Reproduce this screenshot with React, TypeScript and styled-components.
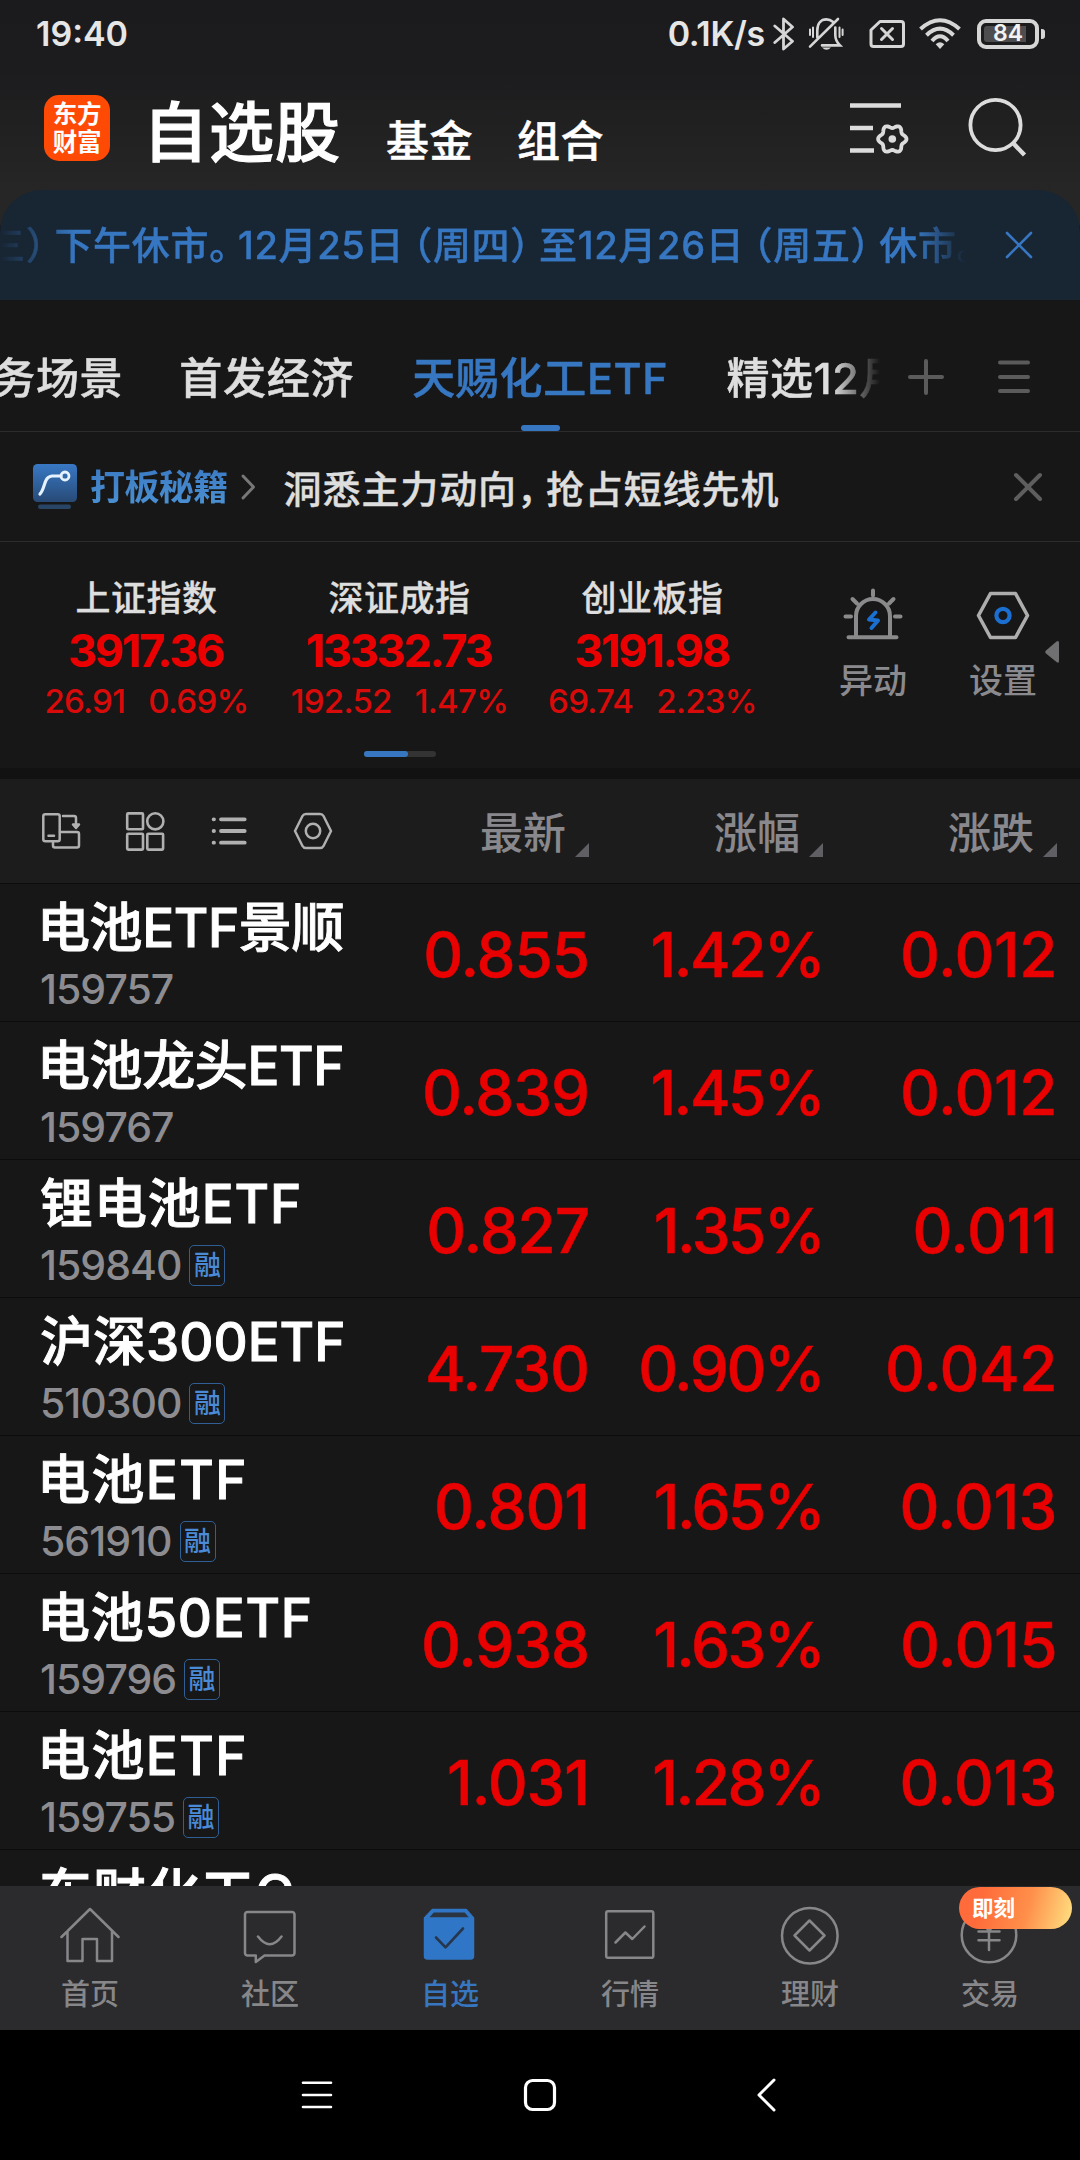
import React from 'react';
import styled, { createGlobalStyle } from 'styled-components';

const GlobalStyle = createGlobalStyle`
  * { box-sizing: border-box; }
  body {
    margin: 0;
    background: #000;
    font-family: Inter, "Noto Sans CJK SC", sans-serif;
    font-weight: 500;
    line-height: 1;
    text-spacing-trim: space-all;
  }
  svg { display: block; flex: none; }
`;

const Screen = styled.div`
  width: 1080px;
  height: 2160px;
  display: flex;
  flex-direction: column;
  overflow: hidden;
  background: #171717;
  color: #e0e0e0;
  white-space: nowrap;
`;

/* ---------- status bar + title ---------- */

const Top = styled.header`
  height: 225px;
  flex: none;
  background: linear-gradient(#1b1b1d 0, #1c1c1e 70px, #262626 190px);
`;

const StatusBar = styled.div`
  height: 67px;
  padding: 0 35px 0 36px;
  display: flex;
  align-items: center;
  color: #e6e6e6;
  font-size: 34px;
  font-weight: 600;
`;

const NetSpeed = styled.span`
  margin-left: auto;
  margin-right: 8px;
  letter-spacing: -0.3px;
`;

const StatusIcons = styled.div`
  display: flex;
  align-items: center;
`;

const Battery = styled.div`
  width: 62px;
  height: 30px;
  margin-left: 16px;
  padding: 3px;
  border: 4px solid #d6d6d6;
  border-radius: 9px;
  display: flex;
`;

const BatteryLevel = styled.div`
  width: 42px;
  height: 16px;
  border-radius: 3px 0 0 3px;
  background: #4d4d4f;
  display: flex;
  align-items: center;
  justify-content: flex-end;
  padding-right: 3px;
  font-size: 23px;
  color: #f2f2f2;
`;

const BatteryTip = styled.div`
  width: 4px;
  height: 10px;
  margin-left: 2px;
  border-radius: 0 3px 3px 0;
  background: #d6d6d6;
`;

const TitleBar = styled.div`
  height: 123px;
  padding: 0 50px 0 44px;
  display: flex;
  align-items: center;
`;

const Logo = styled.div`
  width: 66px;
  height: 66px;
  margin-top: -1px;
  border-radius: 15px;
  background: #ff4a06;
  color: #fff;
  display: flex;
  flex-direction: column;
  align-items: center;
  justify-content: center;
  gap: 2px;
  font-size: 24.5px;
  font-weight: 700;
  line-height: 26px;
  letter-spacing: -0.3px;
`;

const Title = styled.h1`
  margin: 8px 0 0 33px;
  font-size: 65px;
  font-weight: 500;
  letter-spacing: 1px;
  color: #fff;
  -webkit-text-stroke: 1.2px #fff;
`;

const TitleLink = styled.span<{ $gap: number }>`
  margin: 26px 0 0 ${(p) => p.$gap}px;
  font-size: 43px;
  letter-spacing: 0.5px;
  color: #fff;
  -webkit-text-stroke: 0.5px #fff;
`;

const TitleActions = styled.div`
  margin-left: auto;
  display: flex;
  align-items: center;
  gap: 58px;
`;

/* ---------- notice ---------- */

const Notice = styled.div`
  height: 110px;
  margin-top: -35px;
  flex: none;
  display: flex;
  align-items: center;
  border-radius: 42px 42px 0 0;
  background: #182533;
  color: #3777c2;
`;

const NoticeText = styled.div`
  width: 974px;
  height: 60px;
  display: flex;
  align-items: center;
  overflow: hidden;
  font-size: 38px;
  letter-spacing: 0.7px;
  text-indent: -13px;
  -webkit-text-stroke: 0.4px #3777c2;
  mask-image: linear-gradient(90deg, transparent 0, #000 75px, #000 915px, transparent 966px);
`;

const Punct = styled.span<{ $open?: boolean }>`
  font-feature-settings: "halt";
  margin: ${(p) => (p.$open ? '0 0 0 9px' : '0 9px 0 0')};
`;

const NoticeClose = styled.div`
  margin-left: 29.5px;
`;

/* ---------- group tabs ---------- */

const Tabs = styled.nav`
  height: 132px;
  flex: none;
  display: flex;
  border-bottom: 1px solid #2d2d2e;
`;

const TabStrip = styled.div`
  width: 882px;
  display: flex;
  gap: 58px;
  overflow: hidden;
  mask-image: linear-gradient(90deg, #000 832px, transparent 880px);
`;

const Tab = styled.div<{ $active?: boolean }>`
  flex: none;
  display: flex;
  flex-direction: column;
  align-items: center;
  padding-top: 57px;
  font-size: 43px;
  letter-spacing: 0.7px;
  color: ${(p) => (p.$active ? '#3777c2' : '#dedede')};
  -webkit-text-stroke: 0.5px ${(p) => (p.$active ? '#3777c2' : '#dedede')};
  &:first-child { margin: 0 -2px 0 -51.5px; }
`;

const TabMark = styled.i`
  width: 39px;
  height: 6px;
  margin-top: 25px;
  border-radius: 3px;
  background: #3777c2;
`;

const TabTools = styled.div`
  display: flex;
  gap: 53px;
  padding: 58px 0 0 25px;
`;

/* ---------- promo ---------- */

const Promo = styled.div`
  height: 110px;
  flex: none;
  display: flex;
  align-items: center;
  padding: 0 37px 0 32px;
  border-bottom: 1px solid #2d2d2e;
`;

const PromoBrand = styled.span`
  margin: 0 12px 0 12px;
  font-size: 35px;
  font-weight: 700;
  letter-spacing: -0.6px;
  background: linear-gradient(#3c7ac4, #4b92d2);
  background-clip: text;
  color: transparent;
  line-height: 40px;
`;

const PromoText = styled.span`
  margin: 4px auto 0 27px;
  font-size: 38px;
  letter-spacing: 0.9px;
  color: #dedede;
  -webkit-text-stroke: 0.4px #dedede;
`;

/* ---------- indices ---------- */

const Indices = styled.section`
  height: 237px;
  flex: none;
  display: grid;
  grid-template-columns: 759px 130px 130px 24px;
  padding-left: 20px;
  border-bottom: 11px solid #121212;
`;

const IndexPager = styled.div`
  display: flex;
  flex-direction: column;
  align-items: center;
`;

const IndexList = styled.div`
  display: flex;
  height: 209px;
`;

const IndexCell = styled.div`
  width: 253px;
  padding-top: 39px;
  display: flex;
  flex-direction: column;
  align-items: center;
`;

const IndexName = styled.div`
  font-size: 35px;
  letter-spacing: 0.5px;
  color: #dedede;
  -webkit-text-stroke: 0.3px #dedede;
`;

const IndexValue = styled.div`
  margin: 12px 2px 0 0;
  font-size: 45px;
  font-weight: 700;
  line-height: 46px;
  letter-spacing: -2.2px;
  color: #ea0000;
`;

const IndexChange = styled.div`
  margin-top: 11px;
  display: flex;
  gap: 23px;
  font-size: 33px;
  letter-spacing: -0.7px;
  color: #d90a0a;
`;

const PagerTrack = styled.div`
  width: 72px;
  height: 6px;
  border-radius: 3px;
  background: #333334;
`;

const PagerThumb = styled.div`
  width: 44px;
  height: 6px;
  border-radius: 3px;
  background: #3777c2;
`;

const IndexAction = styled.div`
  display: flex;
  flex-direction: column;
  align-items: center;
  padding: 46px 0 0 60px;
  width: 130px;
  margin-left: -1px;
  gap: 22px;
  font-size: 34px;
  color: #8a8a8e;
`;

const DrawerHandle = styled.div`
  padding: 98px 0 0 6px;
`;

/* ---------- table ---------- */

const columns = '355px 234px 234px 234px';

const TableHead = styled.div`
  height: 105px;
  flex: none;
  display: grid;
  grid-template-columns: ${columns};
  background: #1c1c1c;
  border-bottom: 1px solid #0c0c0c;
`;

const ViewTools = styled.div`
  display: flex;
  align-items: center;
  gap: 44px;
  padding-left: 41px;
`;

const HeadCell = styled.div`
  display: flex;
  justify-content: flex-end;
  padding-top: 33px;
  gap: 9px;
  font-size: 43px;
  color: #88888d;
`;

const SortMark = styled.i`
  width: 14px;
  height: 14px;
  margin-top: 31px;
  background: #606064;
  clip-path: polygon(100% 0, 100% 100%, 0 100%);
`;

const Rows = styled.div`
  height: 1002px;
  flex: none;
  overflow: hidden;
`;

const Row = styled.div`
  height: 138px;
  display: grid;
  grid-template-columns: ${columns};
  border-bottom: 1px solid #0c0c0c;
`;

const Security = styled.div`
  padding: 18px 0 0 40px;
`;

const SecurityName = styled.div<{ $track: number; $hang: number }>`
  margin-left: ${(p) => -p.$hang}px;
  font-size: 53px;
  letter-spacing: ${(p) => p.$track}px;
  color: #fff;
  -webkit-text-stroke: 0.9px #fff;
`;

const SecurityMeta = styled.div`
  display: flex;
  align-items: center;
  gap: 8px;
  height: 42px;
  margin-top: 13px;
  font-size: 41px;
  letter-spacing: -1px;
  color: #8c8c91;
`;

const MarginTag = styled.span`
  width: 36px;
  height: 41px;
  border: 1.5px solid #2f5f94;
  border-radius: 5px;
  display: flex;
  align-items: center;
  justify-content: center;
  font-size: 27px;
  letter-spacing: 0;
  color: #4a8ad6;
`;

const Figure = styled.div<{ $track: number }>`
  display: flex;
  align-items: center;
  justify-content: flex-end;
  padding-top: 4px;
  font-size: 62px;
  letter-spacing: ${(p) => p.$track}px;
  color: #e90000;
  -webkit-text-stroke: 0.5px #e90000;
`;

/* ---------- bottom bars ---------- */

const BottomNav = styled.nav`
  height: 144px;
  flex: none;
  display: grid;
  grid-template-columns: repeat(6, 180px);
  background: #2b2b2d;
`;

const NavItem = styled.div<{ $active?: boolean }>`
  position: relative;
  display: flex;
  flex-direction: column;
  align-items: center;
  padding-top: 20px;
  gap: 14px;
  font-size: 29px;
  color: ${(p) => (p.$active ? '#3777c2' : '#87878a')};
`;

const Ribbon = styled.span`
  position: absolute;
  left: 59px;
  top: 1px;
  width: 113px;
  height: 42px;
  padding-left: 13px;
  border-radius: 21px;
  background: linear-gradient(105deg, #ff6b3a 20%, #ff8f4a 60%, #ffe283 100%);
  color: #fff;
  font-size: 21.5px;
  font-weight: 700;
  line-height: 42px;
`;

const SystemBar = styled.div`
  height: 130px;
  flex: none;
  display: flex;
  align-items: center;
  padding: 0 0 0 301px;
  background: #000;
`;

const SystemKey = styled.div<{ $gap?: number }>`
  margin-left: ${(p) => p.$gap ?? 0}px;
`;

/* ---------- icons ---------- */

type IconProps = { w: number; h: number; color?: string; stroke?: number; children: React.ReactNode };

const Icon = ({ w, h, color = 'currentColor', stroke = 3, children }: IconProps) => (
  <svg
    width={w}
    height={h}
    viewBox={`0 0 ${w} ${h}`}
    fill="none"
    stroke={color}
    strokeWidth={stroke}
    strokeLinecap="round"
    strokeLinejoin="round"
  >
    {children}
  </svg>
);

const gearPath = (cx: number, cy: number) => {
  const points = Array.from({ length: 72 }, (_, i) => {
    const a = (i / 72) * Math.PI * 2;
    const r = 12.6 + 1.6 * Math.cos(6 * a);
    return `${(cx + r * Math.cos(a)).toFixed(2)} ${(cy + r * Math.sin(a)).toFixed(2)}`;
  });
  return `M${points.join('L')}Z`;
};

const StatusGlyphs = () => (
  <StatusIcons>
    <Icon w={22} h={34} color="#d6d6d6" stroke={2.8}>
      <path d="M1.8 9L19.5 24.3L10.5 32V2L19.5 10L1.8 25.5" />
    </Icon>
    <svg width="49" height="34" viewBox="-14 0 49 34" fill="none" stroke="#d6d6d6" strokeWidth="2.6" strokeLinecap="round">
      <path d="M8.3 20.5V13.5C8.3 6.5 12 2.4 17.3 2.4C20 2.4 22 3.2 23.8 4.8M26.3 10.5V18C26.3 22.5 28 25.5 31 28.4H13M1 29.6L29 2" />
      <path d="M13 30.6Q17.5 35 22 30.6Z" fill="#d6d6d6" stroke="none" />
      <path d="M1 12.5v5.5M4 10.5v9.5M30.5 10.5v9.5M33.6 12.5v5.5" strokeWidth="2" />
    </svg>
    <svg width="61" height="30" viewBox="-25 0 61 30" fill="none" stroke="#d6d6d6" strokeWidth="3" strokeLinejoin="round">
      <path d="M11 2.5H32Q34.5 2.5 34.5 5V25Q34.5 27.5 32 27.5H4.5Q2 27.5 2 25V11Z" />
      <path d="M12.5 9.5L23.5 20.5M23.5 9.5L12.5 20.5" strokeLinecap="round" />
    </svg>
    <svg width="56" height="31" viewBox="-14 0 56 31" fill="none" stroke="#d6d6d6" strokeWidth="4">
      <path d="M1.5 11Q21 -6.5 40.5 11M7.5 17.2Q21 4.2 34.5 17.2M13 23Q21 13.5 29 23" />
      <path d="M16.7 26.3Q21 22.3 25.3 26.3L21 31Z" fill="#d6d6d6" stroke="none" />
    </svg>
  </StatusIcons>
);

const FilterIcon = () => (
  <svg width="60" height="54" viewBox="0 0 60 54" fill="none" stroke="#dcdcdc" strokeWidth="4.4">
    <path d="M0 3.5H51M0 26H23M0 48.5H24" />
    <path d={gearPath(42.3, 37)} strokeWidth="3.8" />
    <circle cx="42.3" cy="37" r="3.8" fill="#dcdcdc" stroke="none" />
  </svg>
);

const SearchIcon = () => (
  <Icon w={62} h={62} color="#dcdcdc" stroke={3.8}>
    <circle cx="27.5" cy="27" r="25.1" />
    <path d="M45.5 45.5L56.5 57" strokeWidth="4.4" strokeLinecap="butt" />
  </Icon>
);

const CloseIcon = ({ color, stroke }: { color: string; stroke: number }) => (
  <Icon w={30} h={30} color={color} stroke={stroke}>
    <path d="M3 3L27 27M27 3L3 27" />
  </Icon>
);

const PromoIcon = () => (
  <svg width="46" height="48" viewBox="0 0 46 48">
    <defs>
      <linearGradient id="promoFill" x1="0" y1="0" x2="0" y2="1">
        <stop offset="0" stopColor="#3878c4" />
        <stop offset="1" stopColor="#284a76" />
      </linearGradient>
    </defs>
    <rect x="1" y="1" width="44" height="38" rx="4.5" fill="url(#promoFill)" />
    <rect x="6" y="41.5" width="33" height="4.5" rx="2.2" fill="#294566" />
    <path d="M8 31C13.5 25 11.5 14 20 13H29" fill="none" stroke="#e6f2ff" strokeWidth="3.2" strokeLinecap="round" />
    <circle cx="33" cy="13" r="4" fill="none" stroke="#e6f2ff" strokeWidth="2.8" />
  </svg>
);

const AlarmIcon = () => (
  <Icon w={60} h={54} color="#8a8a8c" stroke={4}>
    <path d="M5.5 49.3H53.5M13 49V28a17 17 0 0 1 34 0V49" />
    <path d="M30 2.5V7.5M9.5 11l4.5 4.5M50.5 11L46 15.5M2.5 28.5H8M52 28.5H57.5" />
    <path d="M32.5 24.5L26 31.5L35 32.5L28.5 40" stroke="#1a6fd0" />
  </Icon>
);

const SettingIcon = () => (
  <Icon w={60} h={54} color="#adadae" stroke={3.6}>
    <path d="M5.5 27.5L17.5 5.5H42.5L54.5 27.5L42.5 49.5H17.5Z" />
    <circle cx="30" cy="27.5" r="6.6" stroke="#1a6fd0" strokeWidth="4.2" />
  </Icon>
);

const ViewIcons = () => (
  <>
    <Icon w={40} h={40} color="#b0b0b0" stroke={2.5}>
      <rect x="2.3" y="3.2" width="16.4" height="27" rx="2" />
      <path d="M7.5 24.7H13M22 5H33a2 2 0 0 1 2 2V14M19 21H36a2 2 0 0 1 2 2V34.5a2 2 0 0 1 -2 2H14a2 2 0 0 1 -2 -2V30.5" />
      <path d="M32 13.5h6l-3 3.5z" fill="#b0b0b0" />
    </Icon>
    <Icon w={40} h={40} color="#b0b0b0" stroke={2.6}>
      <rect x="2.2" y="2.4" width="15.8" height="15.8" rx="1" />
      <circle cx="30.3" cy="10.3" r="8.1" />
      <rect x="2.2" y="22.8" width="15.8" height="15.8" rx="1" />
      <rect x="22.3" y="22.8" width="15.8" height="15.8" rx="1" />
    </Icon>
    <Icon w={40} h={40} color="#b0b0b0" stroke={3.8}>
      <path d="M12 8.3H35.7M12 20H35.7M12 31.7H35.7M4.6 8.3h.4M4.6 20h.4M4.6 31.7h.4" />
    </Icon>
    <Icon w={40} h={40} color="#b0b0b0" stroke={2.5}>
      <path d="M2 20L9.5 5Q10.6 2.9 13 2.9H27Q29.4 2.9 30.5 5L38 20L30.5 35Q29.4 37.1 27 37.1H13Q10.6 37.1 9.5 35Z" />
      <circle cx="20" cy="20" r="7.2" />
    </Icon>
  </>
);

const navIcons: Record<string, React.ReactNode> = {
  home: <path d="M1.5 31L30 3L58.500 31M7.500 25V55H22.500V33H37V55H52V25" />,
  community: (
    <path d="M7.500 6H52a2.500 2.500 0 0 1 2.500 2.500V47a2.500 2.500 0 0 1 -2.500 2.500H24.500L15.800 56V49.500H7.500a2.500 2.500 0 0 1 -2.500 -2.500V8.500a2.500 2.500 0 0 1 2.500 -2.500ZM18 30.500Q29.800 46 41.500 30.500" />
  ),
  watch: (
    <>
      <path d="M5 12L12.500 4H46L53 12V50a2.500 2.500 0 0 1 -2.500 2.500H7.500a2.500 2.500 0 0 1 -2.500 -2.500Z" fill="#3076c6" stroke="#3076c6" />
      <path d="M9.500 11.300L13.800 6.500H44.700L48.800 11.300Z" fill="#2b3441" stroke="none" />
      <path d="M16 31.500L25.500 41.300L43 22.500" stroke="#26374d" strokeWidth={2.6} />
    </>
  ),
  quote: (
    <path d="M8 5.200H51.500a1.800 1.800 0 0 1 1.800 1.800V50a1.800 1.800 0 0 1 -1.800 1.800H8a1.800 1.800 0 0 1 -1.800 -1.800V7a1.800 1.800 0 0 1 1.800 -1.800ZM15.500 36.500L25.400 26.500L32.300 33L44.500 20.500" />
  ),
  wealth: (
    <>
      <circle cx="29.8" cy="29.8" r="27.8" />
      <path d="M29.500 14.500L44.500 29.500L29.500 44.500L14.500 29.500Z" />
    </>
  ),
  trade: (
    <>
      <circle cx="29" cy="29" r="27.3" />
      <path d="M20 13L29 25L38 13M18.500 25.500H39.500M18.500 34.200H39.500M29 25V44" />
    </>
  ),
};

/* ---------- data ---------- */

const indices = [
  { name: '上证指数', value: '3917.36', change: '26.91', percent: '0.69%' },
  { name: '深证成指', value: '13332.73', change: '192.52', percent: '1.47%' },
  { name: '创业板指', value: '3191.98', change: '69.74', percent: '2.23%' },
];

const securities = [
  { name: '电池ETF景顺', code: '159757', last: '0.855', percent: '1.42%', change: '0.012', track: -0.4, hang: 3 },
  { name: '电池龙头ETF', code: '159767', last: '0.839', percent: '1.45%', change: '0.012', track: -0.4, hang: 3 },
  { name: '锂电池ETF', code: '159840', last: '0.827', percent: '1.35%', change: '0.011', track: 0.9, hang: 0, margin: true },
  { name: '沪深300ETF', code: '510300', last: '4.730', percent: '0.90%', change: '0.042', track: 0, hang: 0, margin: true },
  { name: '电池ETF', code: '561910', last: '0.801', percent: '1.65%', change: '0.013', track: 1.4, hang: 3, margin: true },
  { name: '电池50ETF', code: '159796', last: '0.938', percent: '1.63%', change: '0.015', track: 0.7, hang: 3, margin: true },
  { name: '电池ETF', code: '159755', last: '1.031', percent: '1.28%', change: '0.013', track: 1.4, hang: 3, margin: true },
  { name: '东财化工C', code: '', last: '', percent: '', change: '', track: 1, hang: 1 },
];

const navItems = [
  { id: 'home', label: '首页' },
  { id: 'community', label: '社区' },
  { id: 'watch', label: '自选', active: true },
  { id: 'quote', label: '行情' },
  { id: 'wealth', label: '理财' },
  { id: 'trade', label: '交易', ribbon: '即刻' },
];

export default function App() {
  return (
    <>
      <GlobalStyle />
      <Screen>
        <Top>
          <StatusBar>
            <span>19:40</span>
            <NetSpeed>0.1K/s</NetSpeed>
            <StatusGlyphs />
            <Battery>
              <BatteryLevel>84</BatteryLevel>
            </Battery>
            <BatteryTip />
          </StatusBar>
          <TitleBar>
            <Logo>
              <span>东方</span>
              <span>财富</span>
            </Logo>
            <Title>自选股</Title>
            <TitleLink $gap={45}>基金</TitleLink>
            <TitleLink $gap={44}>组合</TitleLink>
            <TitleActions>
              <FilterIcon />
              <SearchIcon />
            </TitleActions>
          </TitleBar>
        </Top>

        <Notice>
          <NoticeText>
            <div>
              三<Punct>）</Punct>下午休市<Punct>。</Punct>12月25日<Punct $open>（</Punct>周四<Punct>）</Punct>
              至12月26日<Punct $open>（</Punct>周五<Punct>）</Punct>休市<Punct>。</Punct>
            </div>
          </NoticeText>
          <NoticeClose>
            <CloseIcon color="#3777c2" stroke={2.6} />
          </NoticeClose>
        </Notice>

        <Tabs>
          <TabStrip>
            <Tab>服务场景</Tab>
            <Tab>首发经济</Tab>
            <Tab $active>
              天赐化工ETF
              <TabMark />
            </Tab>
            <Tab>精选12月</Tab>
          </TabStrip>
          <TabTools>
            <Icon w={38} h={38} color="#5b5b5b" stroke={4}>
              <path d="M3 19H35M19 3V35" />
            </Icon>
            <Icon w={34} h={38} color="#5b5b5b" stroke={4}>
              <path d="M2 4.500H30M2 19H30M2 33H30" />
            </Icon>
          </TabTools>
        </Tabs>

        <Promo>
          <PromoIcon />
          <PromoBrand>打板秘籍</PromoBrand>
          <Icon w={17} h={28} color="#77777a" stroke={3}>
            <path d="M3 3L13.500 14L3 25" />
          </Icon>
          <PromoText>
            洞悉主力动向<Punct>，</Punct>抢占短线先机
          </PromoText>
          <CloseIcon color="#5e5e5e" stroke={4} />
        </Promo>

        <Indices>
          <IndexPager>
            <IndexList>
              {indices.map((item) => (
                <IndexCell key={item.name}>
                  <IndexName>{item.name}</IndexName>
                  <IndexValue>{item.value}</IndexValue>
                  <IndexChange>
                    <span>{item.change}</span>
                    <span>{item.percent}</span>
                  </IndexChange>
                </IndexCell>
              ))}
            </IndexList>
            <PagerTrack>
              <PagerThumb />
            </PagerTrack>
          </IndexPager>
          <IndexAction>
            <AlarmIcon />
            异动
          </IndexAction>
          <IndexAction>
            <SettingIcon />
            设置
          </IndexAction>
          <DrawerHandle>
            <svg width="14" height="24" viewBox="0 0 14 24" fill="#707072">
              <path d="M14 3V21Q14 24 11.500 22L1 13.500Q-.5 12 1 10.500L11.500 1.500Q14 0 14 3Z" />
            </svg>
          </DrawerHandle>
        </Indices>

        <TableHead>
          <ViewTools>
            <ViewIcons />
          </ViewTools>
          {['最新', '涨幅', '涨跌'].map((label) => (
            <HeadCell key={label}>
              {label}
              <SortMark />
            </HeadCell>
          ))}
        </TableHead>

        <Rows>
          {securities.map((item, i) => (
            <Row key={i}>
              <Security>
                <SecurityName $track={item.track} $hang={item.hang}>
                  {item.name}
                </SecurityName>
                <SecurityMeta>
                  {item.code}
                  {item.margin && <MarginTag>融</MarginTag>}
                </SecurityMeta>
              </Security>
              <Figure $track={-1.1}>{item.last}</Figure>
              <Figure $track={-2.5}>{item.percent}</Figure>
              <Figure $track={-0.5}>{item.change}</Figure>
            </Row>
          ))}
        </Rows>

        <BottomNav>
          {navItems.map((item) => (
            <NavItem key={item.id} $active={item.active}>
              <Icon w={60} h={60} stroke={2.5}>
                {navIcons[item.id]}
              </Icon>
              {item.label}
              {item.ribbon && <Ribbon>{item.ribbon}</Ribbon>}
            </NavItem>
          ))}
        </BottomNav>

        <SystemBar>
          <SystemKey>
            <Icon w={32} h={30} color="#fff" stroke={2.6}>
              <path d="M2 2.700H30M2 15H30M2 27H30" />
            </Icon>
          </SystemKey>
          <SystemKey $gap={190}>
            <Icon w={34} h={34} color="#fff" stroke={3.2}>
              <rect x="2.500" y="2.500" width="29" height="29" rx="7" />
            </Icon>
          </SystemKey>
          <SystemKey $gap={199}>
            <Icon w={22} h={34} color="#fff" stroke={3}>
              <path d="M18 2L3 17L18 32" />
            </Icon>
          </SystemKey>
        </SystemBar>
      </Screen>
    </>
  );
}
